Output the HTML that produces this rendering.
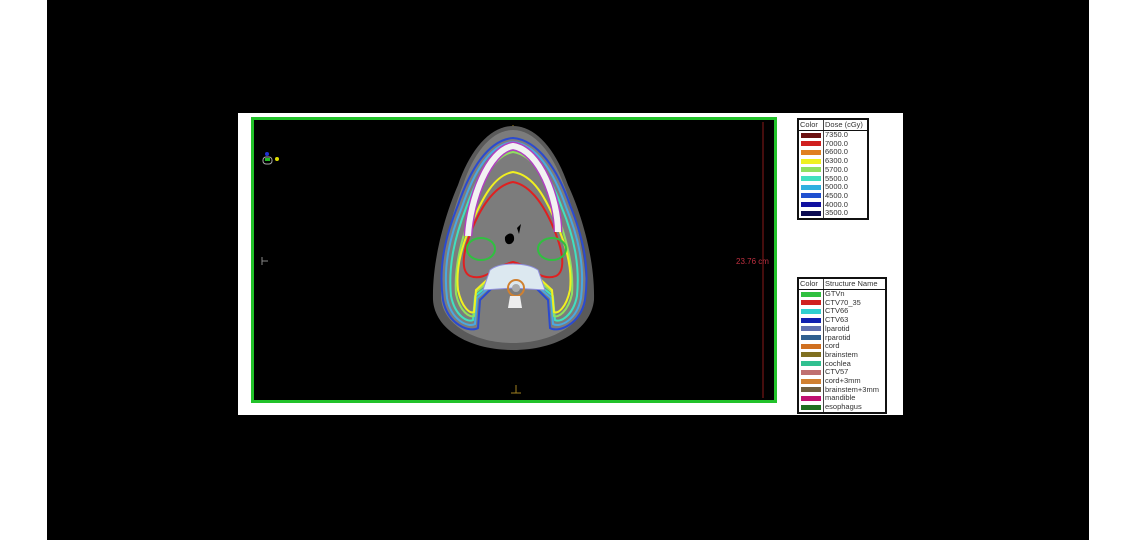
<!DOCTYPE html>
<html><head><meta charset="utf-8"><style>
body{margin:0;width:1140px;height:540px;background:#fff;position:relative;overflow:hidden;font-family:"Liberation Sans",sans-serif}
.blk{position:absolute;left:47px;top:0;width:1042px;height:540px;background:#000}
.panel{position:absolute;left:238px;top:113px;width:665px;height:302px;background:#fff}
svg{position:absolute;left:0;top:0}
table{position:absolute;border-collapse:collapse;border:2px solid #111;font-size:7.5px;color:#333;background:#fff}
td{border-left:1px solid #444;padding:0 1px;line-height:8.7px;height:8.7px;white-space:nowrap}
th{font-weight:normal;text-align:left;border:1px solid #444;border-bottom:1.5px solid #111;padding:0 1px;line-height:10px;height:10px}
.s{display:inline-block;width:20px;height:5px;vertical-align:middle;margin:0 1px}
</style></head><body>
<div class="blk"></div>
<div class="panel"></div>
<svg width="1140" height="540" viewBox="0 0 1140 540">
<rect x="252.5" y="118.5" width="523" height="283" fill="#000" stroke="#22c22a" stroke-width="3"/>
<line x1="763" y1="122" x2="763" y2="398" stroke="#8a1a1a" stroke-width="1"/>
<text x="736" y="264" fill="#c03040" font-size="8" font-family="Liberation Sans">23.76 cm</text>
<path d="M262 257v8M262 261h6" stroke="#888" stroke-width="1"/>
<path d="M511 393h10M516 393v-8" stroke="#a08020" stroke-width="1"/>
<path d="M513 125v8" stroke="#a08020"/>
<circle cx="267" cy="154" r="2" fill="#2030d0"/>
<rect x="263" y="157" width="9" height="7" rx="3" fill="none" stroke="#aaa"/>
<rect x="265" y="158" width="5" height="3" fill="#2b2"/>
<circle cx="277" cy="159" r="2" fill="#dd0"/>
<path d="M513 126C490 126 470 150 458 185C445 215 432 260 433 300C435 330 470 350 513 350C556 350 591 330 594 300C595 260 582 215 568 185C556 150 536 126 513 126Z" fill="#5a5a5a"/>
<path d="M513 130C492 130 474 152 463 185C451 215 440 260 441 298C443 325 475 343 513 343C551 343 584 325 586 298C587 260 576 215 564 185C552 152 534 130 513 130Z" fill="#7c7c7c"/>
<g fill="none" stroke-width="2">
<path d="M513 138C488 140 470 170 458 205C446 235 438 265 443 300C448 325 470 333 478 328L480 300L500 280L513 276L528 280L548 300L550 328C558 333 580 325 585 300C590 265 582 235 570 205C558 170 538 140 513 138Z" stroke="#2a4ad0"/>
<path d="M513 142C490 144 474 172 462 207C450 236 443 265 447 298C451 320 468 328 475 324L477 298L500 278L513 274L528 278L551 298L553 324C560 328 577 320 581 298C585 265 578 236 566 207C554 172 536 144 513 142Z" stroke="#4aa8e0"/>
<path d="M513 146C492 148 478 175 466 208C455 237 448 265 451 296C455 316 468 323 473 320L475 296L500 276L528 276L553 296L555 320C560 323 573 316 577 296C580 265 574 237 562 208C550 175 534 148 513 146Z" stroke="#40e0c0"/>
<path d="M513 152C495 155 483 178 472 210C462 238 454 266 456 294C460 312 470 318 474 316L476 292L500 272L528 272L552 292L554 316C558 318 568 312 572 294C574 266 566 238 556 210C546 178 533 155 513 152Z" stroke="#90e060"/>
<path d="M513 172C495 175 483 195 468 232C460 252 456 272 458 290C462 308 470 314 474 312L476 290L500 268L528 268L552 290L554 312C558 314 566 308 570 290C572 272 568 252 560 232C545 195 533 175 513 172Z" stroke="#f0f020"/>
<path d="M513 182C496 185 480 205 468 240C462 258 462 272 470 276C485 282 495 266 513 262C531 266 541 282 556 276C564 272 564 258 558 240C546 205 530 185 513 182Z" stroke="#e02020"/>
<path d="M468 236C470 200 488 150 513 146C540 150 558 200 558 232" stroke="#b040c0" stroke-width="9"/>
<path d="M468 236C470 200 488 150 513 146C540 150 558 200 558 232" stroke="#f2f2f2" stroke-width="6"/>
<ellipse cx="481" cy="249" rx="14" ry="11" stroke="#30c040"/>
<ellipse cx="552" cy="249" rx="14" ry="11" stroke="#30c040"/>
<path d="M490 270C500 262 526 262 538 270L545 290L513 288L483 290Z" fill="#dce8f0" stroke="#9090e0" stroke-width="1"/>
<circle cx="516" cy="288" r="8" stroke="#d08030"/>
<circle cx="516" cy="288" r="4" fill="#aaa" stroke="none"/>
<path d="M510 296L520 296L522 308L508 308Z" fill="#eee" stroke="none"/>
</g>
<path d="M505 237C508 232 515 232 514 240C512 246 504 246 505 237Z" fill="#000"/>
<path d="M517 228L521 224L519 234Z" fill="#000"/>
</svg>
<table style="left:797px;top:118px;width:72px">
<tr><th style="width:22px">Color</th><th>Dose (cGy)</th></tr>
<tr><td><span class="s" style="background:#6a1010"></span></td><td>7350.0</td></tr>
<tr><td><span class="s" style="background:#d02020"></span></td><td>7000.0</td></tr>
<tr><td><span class="s" style="background:#e08020"></span></td><td>6600.0</td></tr>
<tr><td><span class="s" style="background:#f0f020"></span></td><td>6300.0</td></tr>
<tr><td><span class="s" style="background:#90e060"></span></td><td>5700.0</td></tr>
<tr><td><span class="s" style="background:#40e0c0"></span></td><td>5500.0</td></tr>
<tr><td><span class="s" style="background:#30b0e0"></span></td><td>5000.0</td></tr>
<tr><td><span class="s" style="background:#2050d0"></span></td><td>4500.0</td></tr>
<tr><td><span class="s" style="background:#1010a0"></span></td><td>4000.0</td></tr>
<tr><td><span class="s" style="background:#0a0a50"></span></td><td>3500.0</td></tr>
</table>
<table style="left:797px;top:277px;width:90px">
<tr><th style="width:22px">Color</th><th>Structure Name</th></tr>
<tr><td><span class="s" style="background:#30c040"></span></td><td>GTVn</td></tr>
<tr><td><span class="s" style="background:#d02020"></span></td><td>CTV70_35</td></tr>
<tr><td><span class="s" style="background:#30d0d0"></span></td><td>CTV66</td></tr>
<tr><td><span class="s" style="background:#1020b0"></span></td><td>CTV63</td></tr>
<tr><td><span class="s" style="background:#6070b0"></span></td><td>lparotid</td></tr>
<tr><td><span class="s" style="background:#306090"></span></td><td>rparotid</td></tr>
<tr><td><span class="s" style="background:#d07020"></span></td><td>cord</td></tr>
<tr><td><span class="s" style="background:#807020"></span></td><td>brainstem</td></tr>
<tr><td><span class="s" style="background:#30c090"></span></td><td>cochlea</td></tr>
<tr><td><span class="s" style="background:#c07070"></span></td><td>CTV57</td></tr>
<tr><td><span class="s" style="background:#d08030"></span></td><td>cord+3mm</td></tr>
<tr><td><span class="s" style="background:#706040"></span></td><td>brainstem+3mm</td></tr>
<tr><td><span class="s" style="background:#c01070"></span></td><td>mandible</td></tr>
<tr><td><span class="s" style="background:#207020"></span></td><td>esophagus</td></tr>
</table>
</body></html>
